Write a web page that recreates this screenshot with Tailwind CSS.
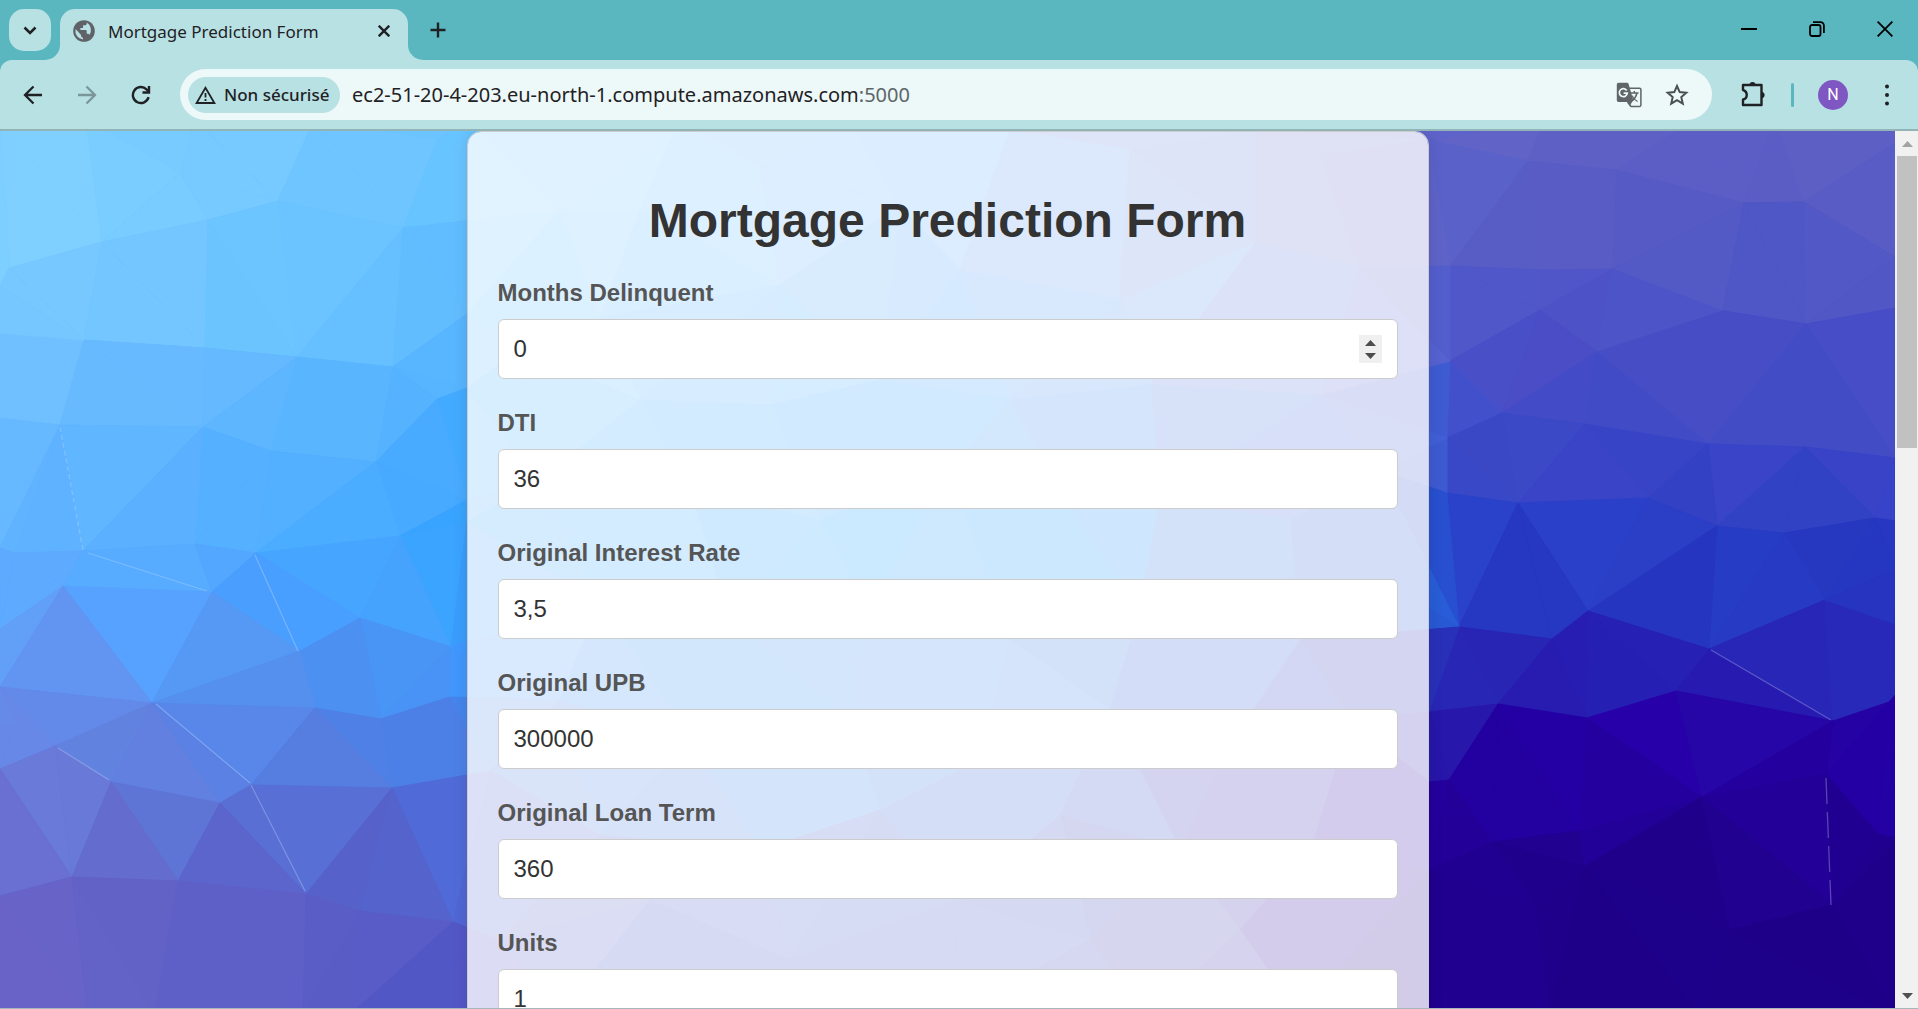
<!DOCTYPE html>
<html lang="fr">
<head>
<meta charset="utf-8">
<meta name="viewport" content="width=device-width, initial-scale=1">
<title>Mortgage Prediction Form</title>
<script src="https://cdn.jsdelivr.net/npm/@tailwindcss/browser@4"></script>
</head>
<body class="flex h-screen flex-col overflow-hidden bg-[#b8e1e4] font-['Noto_Sans',sans-serif] text-[#1f2124]">

<!-- Tab strip -->
<header class="flex h-[60px] shrink-0 items-start bg-[#5ab7c0]">
  <button aria-label="Rechercher dans les onglets" class="mt-[9px] ml-[9px] flex size-[42px] items-center justify-center rounded-[15px] bg-[#b8e1e4]">
    <svg class="size-4" viewBox="0 0 16 16" fill="none" stroke="currentColor" stroke-width="2.6"><path d="M2.500 5.500 8 11l5.500-5.500"/></svg>
  </button>
  <div class="relative mt-[9px] ml-[9px] flex h-[51px] w-[348px] items-center rounded-t-[15px] bg-[#b8e1e4] pr-[14px] pb-[7px] pl-[13px]">
    <svg class="absolute bottom-0 -left-[15px] size-[15px]" viewBox="0 0 15 15" fill="#b8e1e4"><path d="M15 0v15H0A15 15 0 0 0 15 0z"/></svg>
    <svg class="absolute -right-[15px] bottom-0 size-[15px]" viewBox="0 0 15 15" fill="#b8e1e4"><path d="M0 0v15h15A15 15 0 0 1 0 0z"/></svg>
    <svg class="size-[22px]" viewBox="0 0 22 22"><circle cx="11" cy="11" r="10.800" fill="#5f6368"/><path fill="#b8e1e4" d="M13.800 2.600v.8c0 1-.8 1.900-1.900 1.900h-1.800v1.900c0 .5-.4.9-.9.9H7.400V10h5.400c.5 0 .9.400.9.900v2.800h1c.8 0 1.500.5 1.700 1.200A8.600 8.600 0 0 0 13.800 2.600zM2.600 9.100A8.600 8.600 0 0 0 10 19.500v-1.800c-1 0-1.900-.8-1.900-1.900v-.9z"/></svg>
    <span class="ml-[13px] flex-1 pt-[2px] text-[17px] leading-6 whitespace-nowrap">Mortgage Prediction Form</span>
    <button aria-label="Fermer l'onglet" class="flex size-5 items-center justify-center"><svg class="size-3" viewBox="0 0 12 12" stroke="currentColor" stroke-width="2.400"><path d="m.7.700 10.600 10.600M11.300.7.700 11.300"/></svg></button>
  </div>
  <button aria-label="Nouvel onglet" class="mt-5 ml-5 flex size-5 items-center justify-center"><svg class="size-4" viewBox="0 0 16 16" stroke="currentColor" stroke-width="2.400"><path d="M8 .5v15M.5 8h15"/></svg></button>
  <div class="mt-[19px] mr-[23px] ml-auto flex items-center gap-[48px] text-black">
    <button aria-label="Réduire" class="flex size-5 items-center justify-center"><svg class="size-4" viewBox="0 0 16 16" stroke="currentColor" stroke-width="2"><path d="M0 8h16"/></svg></button>
    <button aria-label="Restaurer" class="flex size-5 items-center justify-center"><svg class="size-4" viewBox="0 0 16 16" fill="none" stroke="currentColor" stroke-width="1.800"><rect x="1" y="4" width="10.500" height="11" rx="2"/><path d="M4 1.200h7.500A3.400 3.400 0 0 1 14.900 4.600v7.400"/></svg></button>
    <button aria-label="Fermer" class="flex size-5 items-center justify-center"><svg class="size-4" viewBox="0 0 16 16" stroke="currentColor" stroke-width="1.800"><path d="m.6.600 14.800 14.800M15.400.6.600 15.400"/></svg></button>
  </div>
</header>

<!-- Toolbar -->
<nav class="shrink-0 border-b-2 border-[#93b4b6] bg-[#5ab7c0]">
  <div class="flex h-[69px] items-center rounded-t-[12px] bg-[#b8e1e4] pr-[18px] pl-5">
    <button aria-label="Retour" class="flex size-[26px] items-center justify-center"><svg class="size-5" viewBox="0 0 20 20" fill="none" stroke="currentColor" stroke-width="2.300"><path d="M19 10H2.500M10.500 1.500 2 10l8.500 8.500"/></svg></button>
    <button aria-label="Avancer" class="ml-[28px] flex size-[26px] items-center justify-center text-[#7b9699]"><svg class="size-5" viewBox="0 0 20 20" fill="none" stroke="currentColor" stroke-width="2.300"><path d="M1 10h16.500M9.500 1.500 18 10l-8.500 8.500"/></svg></button>
    <button aria-label="Actualiser" class="ml-[28px] flex size-[26px] items-center justify-center"><svg class="size-5" viewBox="0 0 20 20" fill="none" stroke="currentColor" stroke-width="2.400"><path d="M17.600 12.200A8 8 0 1 1 15.500 4.300L17.800 6.500"/><path d="M18 1v6.500h-6.500"/></svg></button>
    <div class="ml-[26px] flex h-[51px] flex-1 items-center rounded-full bg-[#edf8f8] pr-[22px] pl-2">
      <button class="flex h-9 w-[152px] items-center gap-[8px] rounded-full bg-[#b8e1e4] pl-[7px] text-[17px] font-medium whitespace-nowrap">
        <svg class="h-[18px] w-[21px] shrink-0" viewBox="0 0 21 18" fill="none" stroke="currentColor" stroke-width="1.800"><path d="M10.500 1.800 1.600 17h17.800z"/><path d="M10.500 7v4.500M10.500 13v2"/></svg>
        Non sécurisé
      </button>
      <div class="relative ml-3 h-8 min-w-0 flex-1">
        <input id="url" type="text" aria-label="Adresse" value="ec2-51-20-4-203.eu-north-1.compute.amazonaws.com:5000" class="absolute inset-0 w-full bg-transparent text-[20px] text-transparent outline-none">
        <div aria-hidden="true" class="pointer-events-none relative text-[20px] leading-8 whitespace-nowrap">ec2-51-20-4-203.eu-north-1.compute.amazonaws.com<span class="text-[#5c6668]">:5000</span></div>
      </div>
      <button aria-label="Traduire cette page" class="flex h-[26px] w-[26px] items-center justify-center text-[#5f6568]">
        <svg class="size-[26px]" viewBox="0 0 26 26"><path d="M13 6.200h10.500a1.400 1.400 0 0 1 1.400 1.400V23a1.400 1.400 0 0 1-1.400 1.400H15L11.500 20" fill="none" stroke="currentColor" stroke-width="1.500"/><path fill="currentColor" d="M2.500.8h8.700c.6 0 1.100.4 1.300 1L17.200 18l-3.400 6-2-4H2.500A1.700 1.700 0 0 1 .8 18.300V2.500A1.700 1.700 0 0 1 2.500.8z"/><path d="M10.700 8.500A4 4 0 1 0 11.300 11.200H7.600" fill="none" stroke="#edf8f8" stroke-width="1.700"/><path d="M14.500 11h8M18.300 9v2M21 11c-.8 3.500-2.500 6-5 8M15.800 13.500c1.200 2.500 3 4.500 5.700 6" fill="none" stroke="currentColor" stroke-width="1.400"/></svg>
      </button>
      <button aria-label="Ajouter aux favoris" class="ml-[22px] flex size-[26px] items-center justify-center text-[#4a5052]">
        <svg class="size-6" viewBox="0 0 24 24" fill="none" stroke="currentColor" stroke-width="2"><path d="m12 3 2.700 6.100 6.600.6-5 4.400 1.500 6.500L12 17.200l-5.800 3.400 1.500-6.500-5-4.400 6.600-.6z"/></svg>
      </button>
    </div>
    <button aria-label="Extensions" class="ml-7 flex size-[26px] items-center justify-center"><svg class="size-[26px]" viewBox="0 0 26 26"><path fill="none" stroke="currentColor" stroke-width="2.400" stroke-linejoin="round" d="M3 3h18.500v20H3v-5.500c5-1 5-8 0-9.500z"/><path fill="currentColor" d="M9.500 3a3 3 0 0 1 6 0zM21.500 10a3 3 0 0 1 0 6.200z"/></svg></button>
    <span class="ml-[25px] h-6 w-[3px] rounded-full bg-[#5ab7c0]"></span>
    <button aria-label="Profil" class="ml-[24px] size-[30px] rounded-full bg-[#7e57c2] font-[Roboto] text-[16px] text-white">N</button>
    <button aria-label="Menu" class="ml-[26px] flex size-[26px] items-center justify-center"><svg class="h-[22px] w-1" viewBox="0 0 4 22" fill="currentColor"><circle cx="2" cy="2.500" r="2"/><circle cx="2" cy="11" r="2"/><circle cx="2" cy="19.500" r="2"/></svg></button>
  </div>
</nav>

<!-- Page -->
<div class="flex min-h-0 flex-1 border-b border-[#a5b8bb] font-['Liberation_Sans',Arial,sans-serif]">
  <main class="relative min-w-0 flex-1 overflow-hidden bg-[#4a70e0]">
    <svg id="mesh" aria-hidden="true" class="absolute inset-0 size-full" viewBox="0 131 1895 877" preserveAspectRatio="xMidYMid slice"></svg>
    <form class="relative mx-auto w-full max-w-[962px] rounded-[14px] border border-[#ccc] bg-white/80 bg-clip-padding px-[30px] pt-[54px] pb-8 shadow-[0_0_15px_rgba(0,0,0,0.1)]">
      <h1 class="mb-[23px] text-center text-[48px] leading-[70px] font-bold text-[#333]">Mortgage Prediction Form</h1>
      <div class="flex flex-col gap-[30px] text-[24px] text-[#333]">
        <div>
          <label for="months" class="mb-[12px] block leading-7 font-bold text-[#555]">Months Delinquent</label>
          <div class="relative">
            <input id="months" type="number" value="0" class="block h-[60px] w-full rounded-[6px] border border-[#ccc] bg-white px-[15px] [appearance:textfield] [&::-webkit-inner-spin-button]:appearance-none">
            <button type="button" aria-label="Modifier la valeur" class="absolute top-4 right-4 h-7 w-[23px] bg-[#f0f0f0]"><svg class="size-full" viewBox="0 0 23 28" fill="#4d4d4d"><path d="M6 11h11l-5.500-6zM6 18h11l-5.500 6z"/></svg></button>
          </div>
        </div>
        <div>
          <label for="dti" class="mb-[12px] block leading-7 font-bold text-[#555]">DTI</label>
          <input id="dti" type="text" inputmode="decimal" value="36" class="block h-[60px] w-full rounded-[6px] border border-[#ccc] bg-white px-[15px]">
        </div>
        <div>
          <label for="rate" class="mb-[12px] block leading-7 font-bold text-[#555]">Original Interest Rate</label>
          <input id="rate" type="text" inputmode="decimal" value="3,5" class="block h-[60px] w-full rounded-[6px] border border-[#ccc] bg-white px-[15px]">
        </div>
        <div>
          <label for="upb" class="mb-[12px] block leading-7 font-bold text-[#555]">Original UPB</label>
          <input id="upb" type="text" inputmode="decimal" value="300000" class="block h-[60px] w-full rounded-[6px] border border-[#ccc] bg-white px-[15px]">
        </div>
        <div>
          <label for="term" class="mb-[12px] block leading-7 font-bold text-[#555]">Original Loan Term</label>
          <input id="term" type="text" inputmode="decimal" value="360" class="block h-[60px] w-full rounded-[6px] border border-[#ccc] bg-white px-[15px]">
        </div>
        <div>
          <label for="units" class="mb-[12px] block leading-7 font-bold text-[#555]">Units</label>
          <input id="units" type="text" inputmode="decimal" value="1" class="block h-[60px] w-full rounded-[6px] border border-[#ccc] bg-white px-[15px]">
        </div>
      </div>
    </form>
  </main>
  <!-- Scrollbar -->
  <div aria-hidden="true" class="flex w-[23px] shrink-0 flex-col items-center bg-[#f1f1f1] pl-px">
    <svg class="h-[25px] w-[11px] shrink-0" viewBox="0 0 11 25" fill="#a3a3a3"><path d="M0 16h11L5.500 10z"/></svg>
    <div class="h-1/3 w-5 bg-[#c1c1c1]"></div>
    <svg class="mt-auto h-[25px] w-[11px] shrink-0" viewBox="0 0 11 25" fill="#505050"><path d="M0 10h11l-5.500 6z"/></svg>
  </div>
</div>

<script>
// Low-poly backdrop: triangulate the corner points, then tint each facet from the nearest swatches.
const pts = `0,120 86,120 195,120 314,120 467,120 180,173 208,220 102,242 9,268 278,201 403,228 437,140 0,333 84,340 205,348 297,357 393,367 467,314 437,399 467,388 0,418 60,425 203,427 271,451 376,462 467,500 0,548 15,553 83,551 195,544 256,553 400,536 467,522 0,629 63,586 212,592 300,651 360,618 451,647 152,703 315,708 381,719 450,697 0,687 16,724 55,746 0,724 0,769 111,782 220,803 251,785 392,788 490,771 72,877 178,881 306,894 360,911 453,922 0,896 88,1015 155,1015 303,1015 350,1015 0,1015 0,286
1429,140 1528,161 1545,120 1616,170 1695,120 1744,203 1775,120 1804,202 1895,143 1450,266 1540,270 1612,269 1895,257 1540,310 1597,352 1723,311 1806,324 1895,308 1450,361 1502,413 1585,424 1708,444 1805,447 1895,458 1447,438 1447,493 1518,503 1648,498 1717,526 1784,533 1875,518 1895,521 1459,627 1552,639 1588,611 1709,649 1825,600 1895,624 1498,704 1587,718 1676,691 1833,721 1889,702 1896,694 1896,570 1429,712 1429,782 1449,780 1826,774 1702,797 1493,842 1580,831 1585,866 1429,870 1878,834 1895,838 1833,905 1535,906 1730,930 1895,1015 1700,1015 1550,1015 1429,1015 1895,130
560,210 640,210 760,165 900,205 1010,130 1130,150 1256,130 1320,155 1256,242 1358,267 1120,300 960,270 780,285 600,318 520,350 640,400 772,405 880,380 1010,400 1150,385 1320,395 540,480 690,490 820,520 950,470 1070,510 1160,500 1290,520 1380,470 600,600 730,620 870,610 1010,640 1140,610 1300,640 560,700 690,740 850,720 980,760 1110,710 1230,745 1350,720 600,835 760,850 880,810 1060,815 1180,850 1310,850 500,940 650,900 790,960 960,900 1090,940 1240,930 1380,920 560,1015 760,1015 950,1015 1150,1015 1300,1015 680,120 850,120`.trim().split(/\s+/).map(s => s.split(',').map(Number));
const tints = `30,180,80d1ff 110,200,7acdff 250,180,76caff 380,190,6fc5ff 250,280,6cc5ff 340,280,6bc4ff 420,280,62bdff 60,300,77c8ff 150,280,73c6ff 40,370,70c0ff 130,390,68baff 230,370,64b9ff 330,410,5ab5ff 430,360,58b5ff 20,470,67b9ff 55,490,5fb2ff 130,460,60b6ff 170,500,5bb0ff 230,490,55b1ff 300,470,54afff 350,510,4aadff 430,470,49abff 440,540,38a4ff 20,580,5daaff 130,570,57acff 300,600,499fff 370,570,46a7ff 10,650,649ff8 30,640,62a0f8 70,660,6295f2 150,620,58a2ff 210,660,5599f5 240,690,5590ef 350,680,4c90f2 420,660,4895f6 10,740,6788e6 120,740,6282e0 250,730,5887e9 400,740,4d80e6 320,760,567de0 50,790,697ad9 20,840,6a70d2 100,840,646cce 160,820,5f75d5 190,850,6068cd 220,850,5b65cc 290,830,5870d5 370,860,5662ca 440,840,506bd8 30,950,6963c7 120,930,6261c6 240,940,5f60c7 350,960,5a5cc6 440,980,5257c6
1480,180,5a62ca 1500,140,6163c6 1600,140,5e60c5 1700,160,5c5ec6 1830,150,5e5fc5 1560,220,595cc5 1850,210,5a5cc6 1680,260,5359c5 1760,250,4f56c5 1850,260,5258c5 1480,300,5057c8 1630,320,4d54c8 1540,350,4a4dc5 1700,360,474dc5 1780,400,424dc5 1860,360,474dc6 1580,400,434cc6 1480,400,424fca 1437,400,3e5bd2 1490,460,3a48c6 1600,460,3944c7 1690,490,3341c4 1750,470,3944c8 1800,500,3142c4 1860,480,3843c8 1437,560,244fcf 1480,530,2a42c9 1600,540,2b40c8 1520,580,2637c1 1680,590,2535c0 1750,570,273cc5 1860,560,2536c0 1480,680,2826b5 1550,680,271bb0 1620,670,261fb3 1780,650,2826b6 1860,660,2829b8 1740,690,261ab0 1450,740,2717aa 1540,760,2400a4 1500,780,2300a0 1680,740,2700aa 1620,780,24009e 1790,750,24009e 1870,760,2400a4 1460,830,230098 1540,880,1f008d 1680,880,1e008b 1790,820,230097 1850,860,20008f 1600,960,1e0088 1860,970,1d0087 1450,960,20008f
500,180,68c4ff 560,180,62bfff 700,200,55b5ff 900,200,4da8ff 1050,180,4f90f0 1150,180,5b7bdc 1300,180,5f6ccf 1380,200,5f63c8 560,300,50b8ff 700,330,3ba5ff 950,350,3098ff 1100,300,4a90f0 1300,330,5070dd 1400,330,5562d0 520,420,38a8ff 700,430,1f9bff 900,430,1898ff 1100,430,2f80ee 1300,430,3566dd 1400,440,4160d5 600,560,20a0ff 850,550,0098ff 1050,560,008cff 1250,560,2a6de0 1400,560,2860d8 500,650,4098ff 700,680,1f85f0 950,680,2f7cf0 1200,680,2a55d8 1400,700,2830b8 550,780,4078e0 800,780,2878e8 1000,800,2860d8 1250,780,281fb0 1400,800,2500a0 560,900,5058c8 750,920,3a50c8 950,930,3048c0 1150,930,3030a8 1350,930,250095 700,980,3044c4`.trim().split(/\s+/).map(s => {
  const [x, y, h] = s.split(',');
  return [+x, +y, parseInt(h.slice(0, 2), 16), parseInt(h.slice(2, 4), 16), parseInt(h.slice(4), 16)];
});
const n = pts.length;
const all = pts.concat([[-9000, -9000], [12000, -9000], [900, 15000]]);
function tri(a, b, c) {
  const [ax, ay] = all[a], [bx, by] = all[b], [cx, cy] = all[c];
  const d = 2 * (ax * (by - cy) + bx * (cy - ay) + cx * (ay - by)) || 1e-9;
  const A = ax * ax + ay * ay, B = bx * bx + by * by, C = cx * cx + cy * cy;
  const ux = (A * (by - cy) + B * (cy - ay) + C * (ay - by)) / d;
  const uy = (A * (cx - bx) + B * (ax - cx) + C * (bx - ax)) / d;
  return { v: [a, b, c], ux, uy, r: (ax - ux) ** 2 + (ay - uy) ** 2 };
}
let tris = [tri(n, n + 1, n + 2)];
for (let i = 0; i < n; i++) {
  const edges = new Map(), keep = [];
  for (const t of tris) {
    if ((all[i][0] - t.ux) ** 2 + (all[i][1] - t.uy) ** 2 < t.r) {
      for (let k = 0; k < 3; k++) {
        const p = t.v[k], q = t.v[(k + 1) % 3], key = Math.min(p, q) + '-' + Math.max(p, q);
        edges.has(key) ? edges.delete(key) : edges.set(key, [p, q]);
      }
    } else keep.push(t);
  }
  for (const [p, q] of edges.values()) keep.push(tri(p, q, i));
  tris = keep;
}
let out = '';
for (const t of tris) {
  if (t.v.some(k => k >= n)) continue;
  const p = t.v.map(k => all[k]);
  const x = (p[0][0] + p[1][0] + p[2][0]) / 3, y = (p[0][1] + p[1][1] + p[2][1]) / 3;
  let w = 0, c = [0, 0, 0];
  for (const s of tints) {
    const k = 1 / (((s[0] - x) ** 2 + ((s[1] - y) * 1.5) ** 2 + 60) ** 2);
    w += k;
    for (let j = 0; j < 3; j++) c[j] += s[j + 2] * k;
  }
  const f = `rgb(${c.map(v => Math.round(v / w))})`;
  out += `<path d="M${p.join('L')}Z" fill="${f}" stroke="${f}"/>`;
}
out += '<g fill="none" stroke="#d5e2ff" stroke-opacity=".3" stroke-width="1.3"><path stroke-dasharray="5 3" d="M60 427 83 550"/><path d="M88 553 207 591M255 555 298 651M156 704 250 783M251 785 305 891M58 748 109 780M1711 650 1831 720"/><path stroke-dasharray="26 8" d="M1826 778 1831 905"/></g>';
document.getElementById('mesh').innerHTML = out;
</script>
</body>
</html>
